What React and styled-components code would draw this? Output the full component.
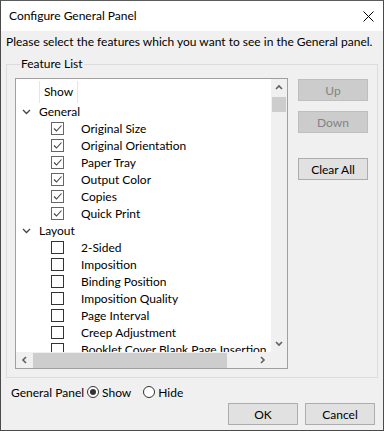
import React from 'react'
import styled, { createGlobalStyle } from 'styled-components'

const GlobalStyle = createGlobalStyle`
  html, body {
    margin: 0;
    padding: 0;
    background: #f0f0f0;
  }
  body {
    font-family: 'Segoe UI', Lato, 'Noto Sans', sans-serif;
    font-size: 12px;
    color: #000;
  }
`

const Window = styled.div`
  width: 384px;
  height: 431px;
  box-sizing: border-box;
  border: 1px solid #4a4a4a;
  border-top-color: #5c5c5c;
  background: #f0f0f0;
  display: flex;
  flex-direction: column;
`

const TitleBar = styled.div`
  height: 30px;
  flex: none;
  background: #fff;
  display: flex;
  align-items: center;
  justify-content: space-between;
  padding: 0 9px 0 8px;
`

const Title = styled.span`
  font-size: 12px;
  line-height: 16px;
`

const Body = styled.div`
  flex: 1;
  display: flex;
  flex-direction: column;
  padding: 0 5px;
`

const Prompt = styled.div`
  line-height: 16px;
  margin-top: 3px;
  white-space: nowrap;
`

const Group = styled.fieldset`
  margin: 6px 0 0 0;
  padding: 6px 8px 8px 8px;
  border: 1px solid #dcdcdc;
  display: flex;
  gap: 10px;
  min-width: 0;
  width: 372px;
  box-sizing: border-box;
`

const GroupLabel = styled.legend`
  padding: 0 1px;
  margin-left: 5px;
  line-height: 16px;
`

const ListFrame = styled.div`
  width: 273px;
  height: 291px;
  box-sizing: border-box;
  border: 1px solid #a0a0a0;
  display: grid;
  grid-template-columns: 1fr 16px;
  grid-template-rows: 1fr 16px;
  background: #fff;
  flex: none;
`

const ListContent = styled.div`
  overflow: hidden;
  background: #fff;
`

const Header = styled.div`
  height: 24px;
  display: flex;
  align-items: stretch;
`

const HeaderCell = styled.div`
  width: ${p => p.$w}px;
  box-sizing: border-box;
  border-right: 1px solid #e5e5e5;
  display: flex;
  align-items: center;
  justify-content: center;
  padding-bottom: 2px;
  margin: 2px 0 0 0;
`

const Row = styled.div`
  height: 17px;
  display: flex;
  align-items: center;
  white-space: nowrap;
  padding-left: ${p => p.$indent}px;
`

const Chevron = styled.svg`
  width: 9px;
  height: 6px;
  margin-right: 8px;
  flex: none;
`

const Check = styled.span`
  width: 13px;
  height: 13px;
  box-sizing: border-box;
  border: 1px solid ${p => (p.$on ? '#666' : '#333')};
  background: #fff;
  display: flex;
  align-items: center;
  justify-content: center;
  margin-right: 17px;
  flex: none;
`

const VScroll = styled.div`
  background: #f0f0f0;
  display: flex;
  flex-direction: column;
`

const HScroll = styled.div`
  background: #f0f0f0;
  display: flex;
`

const Corner = styled.div`
  background: #f0f0f0;
`

const ScrollArrow = styled.div`
  width: ${p => (p.$h ? 17 : 16)}px;
  height: ${p => (p.$h ? 16 : 17)}px;
  display: flex;
  align-items: center;
  justify-content: center;
  flex: none;
`

const VThumb = styled.div`
  height: 15px;
  background: #cdcdcd;
  margin: 1px 1px 0 1px;
`

const HThumb = styled.div`
  width: 194px;
  background: #cdcdcd;
  margin: 1px 0 0 0;
`

const Spacer = styled.div`
  flex: 1;
`

const SideButtons = styled.div`
  display: flex;
  flex-direction: column;
  padding-top: 1px;
`

const Button = styled.button`
  width: ${p => p.$w || 70}px;
  height: 22px;
  box-sizing: border-box;
  border: 1px solid ${p => (p.disabled ? '#bfbfbf' : '#adadad')};
  background: ${p => (p.disabled ? '#cccccc' : '#e1e1e1')};
  color: ${p => (p.disabled ? '#838383' : '#000')};
  font-family: 'Segoe UI', Lato, 'Noto Sans', sans-serif;
  font-size: 12px;
  padding: 0;
  margin-bottom: ${p => p.$mb || 0}px;
`

const PanelRow = styled.div`
  display: flex;
  align-items: center;
  height: 16px;
  margin-top: 6px;
  padding-left: 5px;
`

const RadioLabel = styled.label`
  display: flex;
  align-items: center;
  margin-right: 9px;
`

const Radio = styled.span`
  width: 12px;
  height: 12px;
  box-sizing: border-box;
  border-radius: 50%;
  border: 1px solid #333;
  background: #fff;
  display: flex;
  align-items: center;
  justify-content: center;
  margin: 0 3px 0 3px;

  &::after {
    content: '';
    width: 6px;
    height: 6px;
    border-radius: 50%;
    background: ${p => (p.$on ? '#333' : 'transparent')};
  }
`

const Footer = styled.div`
  display: flex;
  justify-content: flex-end;
  gap: 7px;
  margin-top: 3px;
  padding-right: 3px;
`

const ChevronIcon = ({ dir }) => {
  const paths = {
    up: 'M1 5 L4 2 L7 5',
    down: 'M1 2 L4 5 L7 2',
    left: 'M5 1 L2 4 L5 7',
    right: 'M2 1 L5 4 L2 7',
  }
  return (
    <svg width="8" height="8" viewBox="0 0 8 8">
      <path d={paths[dir]} fill="none" stroke="#606060" strokeWidth="1.6" />
    </svg>
  )
}

const CheckMark = () => (
  <svg width="11" height="11" viewBox="0 0 11 11">
    <path d="M2 5.5 L4.5 8 L9.5 2.5" fill="none" stroke="#444" strokeWidth="1.1" />
  </svg>
)

const groups = [
  {
    name: 'General',
    items: [
      ['Original Size', true],
      ['Original Orientation', true],
      ['Paper Tray', true],
      ['Output Color', true],
      ['Copies', true],
      ['Quick Print', true],
    ],
  },
  {
    name: 'Layout',
    items: [
      ['2-Sided', false],
      ['Imposition', false],
      ['Binding Position', false],
      ['Imposition Quality', false],
      ['Page Interval', false],
      ['Creep Adjustment', false],
      ['Booklet Cover Blank Page Insertion', false],
    ],
  },
]

const App = () => (
  <>
    <GlobalStyle />
    <Window>
      <TitleBar>
        <Title>Configure General Panel</Title>
        <svg width="11" height="11" viewBox="0 0 11 11">
          <path d="M0.5 0.5 L10.5 10.5 M10.5 0.5 L0.5 10.5" stroke="#000" strokeWidth="1" />
        </svg>
      </TitleBar>
      <Body>
        <Prompt>Please select the features which you want to see in the General panel.</Prompt>
        <Group>
          <GroupLabel>Feature List</GroupLabel>
          <ListFrame>
            <ListContent>
              <Header>
                <HeaderCell $w={24} />
                <HeaderCell $w={38}>Show</HeaderCell>
              </Header>
              {groups.map(g => (
                <React.Fragment key={g.name}>
                  <Row $indent={6}>
                    <Chevron viewBox="0 0 9 6">
                      <path d="M1 1 L4.5 4.5 L8 1" fill="none" stroke="#444" strokeWidth="1.3" />
                    </Chevron>
                    {g.name}
                  </Row>
                  {g.items.map(([label, on]) => (
                    <Row key={label} $indent={35}>
                      <Check $on={on}>{on && <CheckMark />}</Check>
                      {label}
                    </Row>
                  ))}
                </React.Fragment>
              ))}
            </ListContent>
            <VScroll>
              <ScrollArrow>
                <ChevronIcon dir="up" />
              </ScrollArrow>
              <VThumb />
              <Spacer />
              <ScrollArrow>
                <ChevronIcon dir="down" />
              </ScrollArrow>
            </VScroll>
            <HScroll>
              <ScrollArrow $h>
                <ChevronIcon dir="left" />
              </ScrollArrow>
              <HThumb />
              <Spacer />
              <ScrollArrow $h>
                <ChevronIcon dir="right" />
              </ScrollArrow>
            </HScroll>
            <Corner />
          </ListFrame>
          <SideButtons>
            <Button disabled $mb={10}>Up</Button>
            <Button disabled $mb={25}>Down</Button>
            <Button>Clear All</Button>
          </SideButtons>
        </Group>
        <PanelRow>
          General Panel
          <RadioLabel>
            <Radio $on />
            Show
          </RadioLabel>
          <RadioLabel>
            <Radio />
            Hide
          </RadioLabel>
        </PanelRow>
        <Footer>
          <Button>OK</Button>
          <Button>Cancel</Button>
        </Footer>
      </Body>
    </Window>
  </>
)

export default App
